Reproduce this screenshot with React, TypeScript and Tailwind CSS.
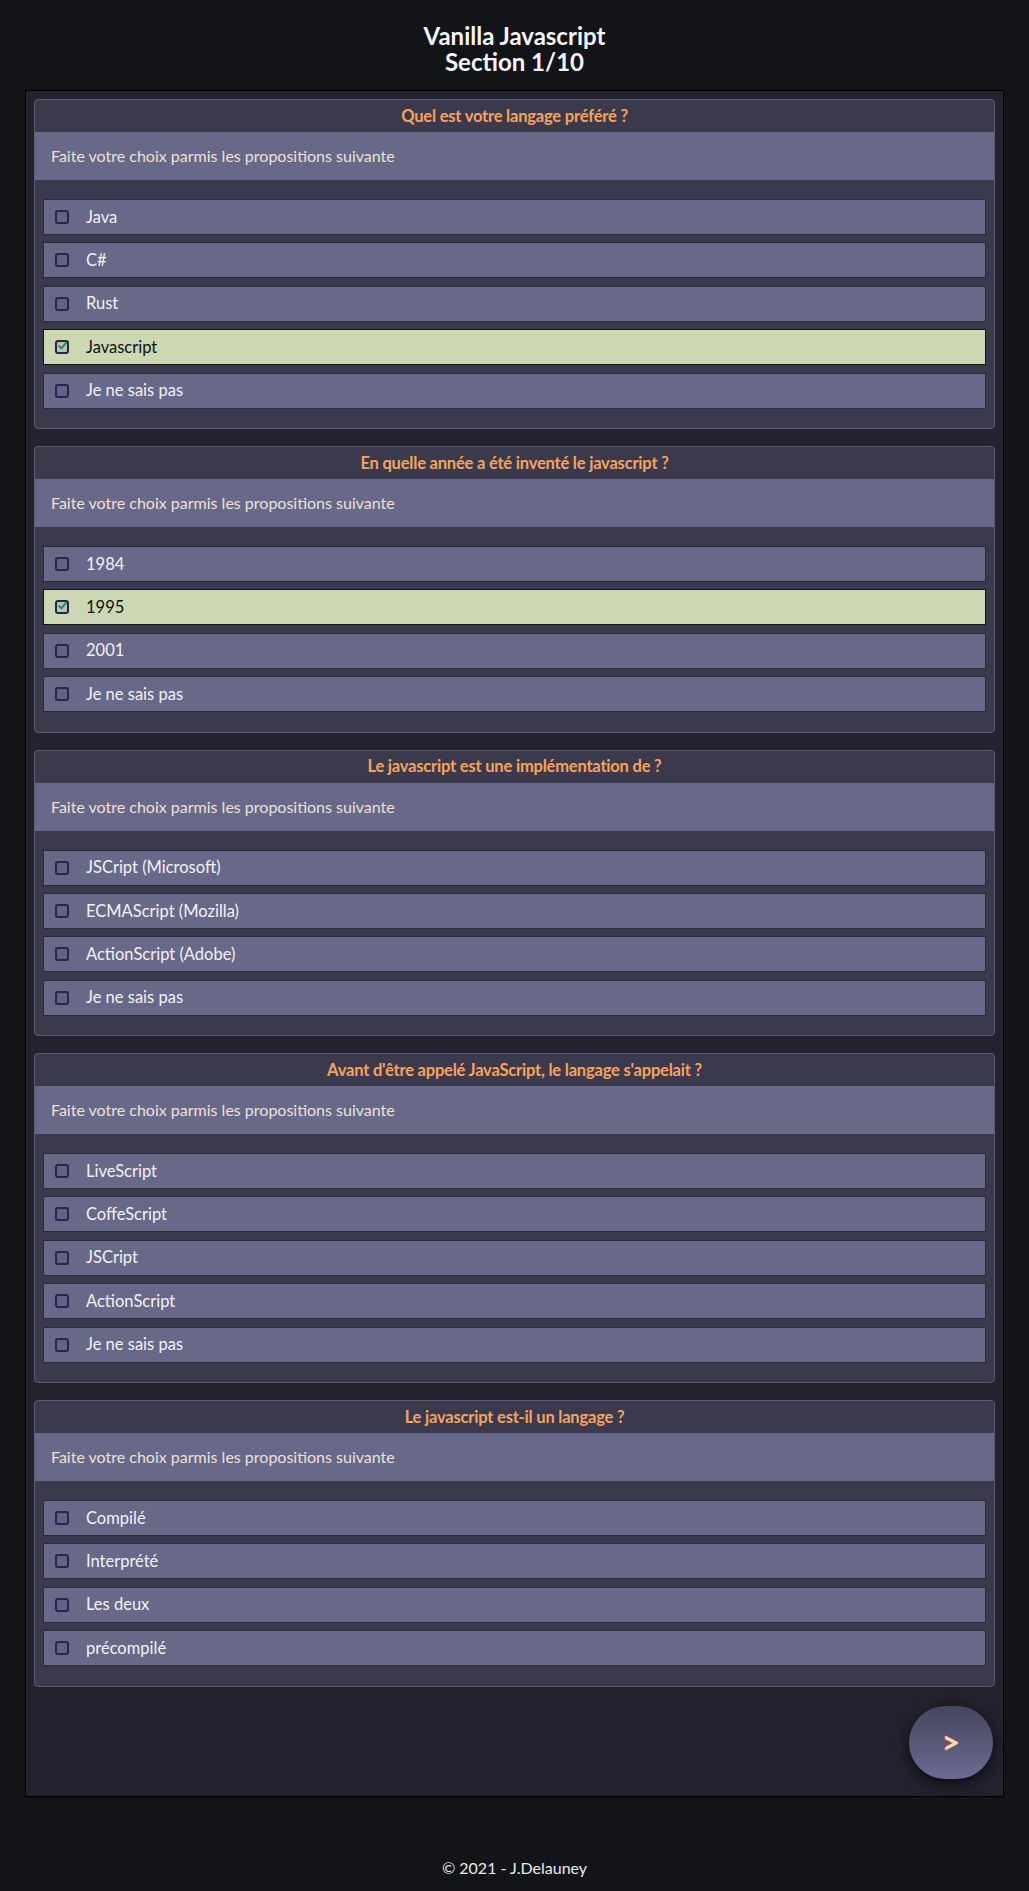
type Question = {
  title: string;
  options: string[];
  checked?: number;
};

const questions: Question[] = [
  {
    title: "Quel est votre langage préféré ?",
    options: ["Java", "C#", "Rust", "Javascript", "Je ne sais pas"],
    checked: 3,
  },
  {
    title: "En quelle année a été inventé le javascript ?",
    options: ["1984", "1995", "2001", "Je ne sais pas"],
    checked: 1,
  },
  {
    title: "Le javascript est une implémentation de ?",
    options: ["JSCript (Microsoft)", "ECMAScript (Mozilla)", "ActionScript (Adobe)", "Je ne sais pas"],
  },
  {
    title: "Avant d'être appelé JavaScript, le langage s'appelait ?",
    options: ["LiveScript", "CoffeScript", "JSCript", "ActionScript", "Je ne sais pas"],
  },
  {
    title: "Le javascript est-il un langage ?",
    options: ["Compilé", "Interprété", "Les deux", "précompilé"],
  },
];

function Checkbox({ checked }: { checked: boolean }) {
  return (
    <span
      className={`w-[14px] h-[14px] rounded-[3px] border-2 border-[#25264a] flex items-center justify-center shrink-0 ${
        checked ? "bg-[#b9c3ad]" : "bg-[#62628a]"
      }`}
    >
      {checked && (
        <svg viewBox="0 0 12 12" className="w-[12px] h-[12px] -mt-[2px] ml-[1px]">
          <path d="M1.5 6.2 L4.6 9.2 L10.8 1.5" fill="none" stroke="#22876b" strokeWidth="2.6" strokeLinecap="round" strokeLinejoin="round" />
        </svg>
      )}
    </span>
  );
}

function QuestionCard({ q }: { q: Question }) {
  return (
    <section className="bg-[#3b3a4c] border border-[#5b5a78] rounded-[4px] overflow-hidden mb-[17px]">
      <h2 className="h-[32px] flex items-center justify-center text-[#f7a35c] font-bold text-[16.5px] tracking-[-0.2px]">
        {q.title}
      </h2>
      <div className="h-[48px] bg-[#686888] flex items-center pl-[16px] text-[#eee1d6] text-[16px]">
        Faite votre choix parmis les propositions suivante
      </div>
      <div className="pt-[19px] px-[8px] pb-[12px]">
        {q.options.map((o, i) => {
          const on = q.checked === i;
          return (
            <label
              key={o}
              className={`h-[36px] mb-[7.4px] flex items-center gap-[17px] pl-[11px] border ${
                on ? "bg-[#cbd8b1] border-[#141414] text-[#111]" : "bg-[#686888] border-[#2a2a3b] text-[#f2f2f6]"
              } text-[16.5px]`}
            >
              <Checkbox checked={on} />
              <span>{o}</span>
            </label>
          );
        })}
      </div>
    </section>
  );
}

export default function App() {
  return (
    <div className="min-h-screen bg-[#131418] font-['Lato',sans-serif] flex flex-col">
      <header className="pt-[23px] text-center text-[#f4f4fa] font-bold text-[24px] leading-[26px]">
        Vanilla Javascript
        <br />
        Section 1/10
      </header>

      <main className="mx-[25px] mt-[15px] border border-black bg-[#25222f] pt-[8px] px-[8px] pb-[17px]">
        {questions.map((q) => (
          <QuestionCard key={q.title} q={q} />
        ))}
        <div className="flex justify-end pr-[2px] pt-[2px]">
          <button className="w-[84px] h-[73px] rounded-full bg-gradient-to-b from-[#45455e] to-[#6c6c92] shadow-[0_4px_16px_rgba(0,0,0,0.75)] flex items-center justify-center text-[#fbdaa9] font-bold text-[32px] leading-none [text-shadow:-2px_0_0_#b84a5a]">
            &gt;
          </button>
        </div>
      </main>

      <footer className="h-[96px] flex items-end justify-center pb-[13px] text-[#ececf0] text-[16px] leading-[24px]">
        © 2021 - J.Delauney
      </footer>
    </div>
  );
}
